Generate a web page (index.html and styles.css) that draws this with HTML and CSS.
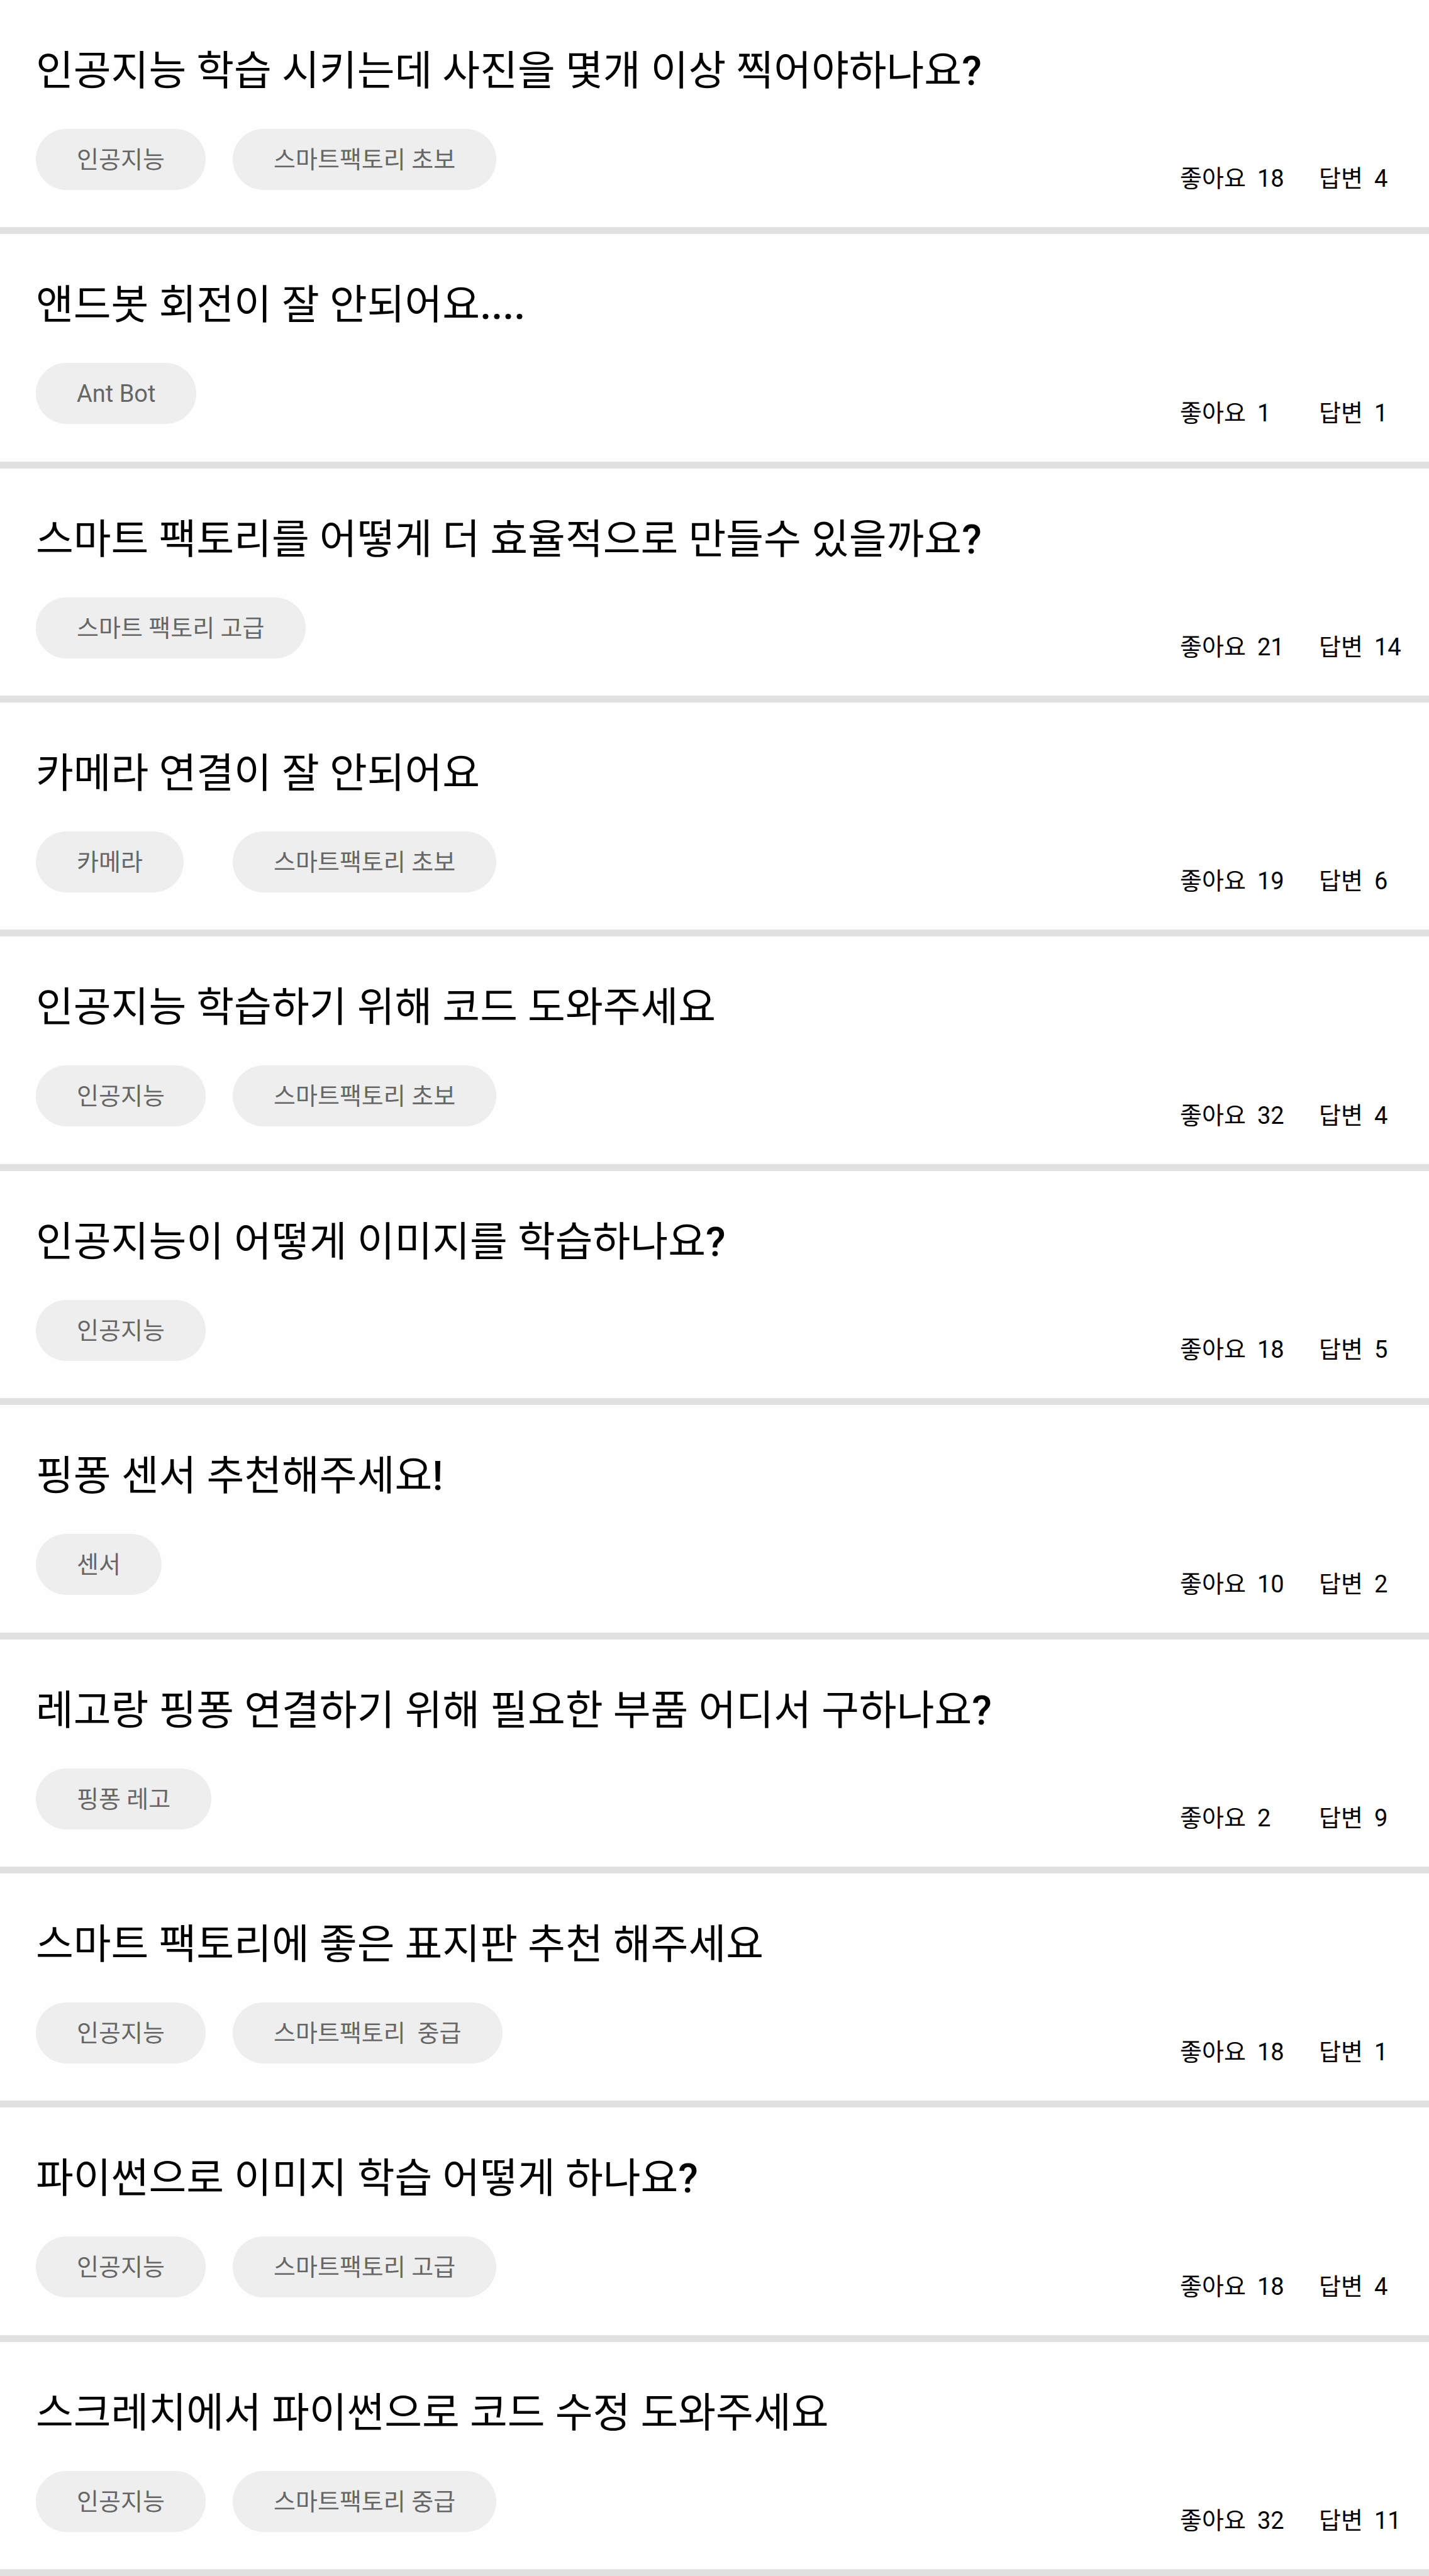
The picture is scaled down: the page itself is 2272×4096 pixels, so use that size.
FILE: index.html
```html
<!DOCTYPE html>
<html lang="ko">
<head>
  <meta charset="utf-8">
  <meta name="viewport" content="width=device-width, initial-scale=1">
  <title>질문 목록</title>
  <link rel="stylesheet" href="styles.css">
</head>
<body>
  <main class="questions">
    <article class="question">
      <div class="question-body">
        <h2 class="question-title"><a href="#q1">인공지능 학습 시키는데 사진을 몇개 이상 찍어야하나요<span class="mark">?</span></a></h2>
        <ul class="tags"><li><a class="tag" href="#t">인공지능</a></li><li><a class="tag" href="#t">스마트팩토리 초보</a></li></ul>
      </div>
      <dl class="stats"><div class="stat"><dt>좋아요</dt><dd>18</dd></div><div class="stat"><dt>답변</dt><dd>4</dd></div></dl>
    </article>
    <article class="question">
      <div class="question-body">
        <h2 class="question-title"><a href="#q2">앤드봇 회전이 잘 안되어요<span class="mark">....</span></a></h2>
        <ul class="tags"><li><a class="tag" href="#t">Ant Bot</a></li></ul>
      </div>
      <dl class="stats"><div class="stat"><dt>좋아요</dt><dd>1</dd></div><div class="stat"><dt>답변</dt><dd>1</dd></div></dl>
    </article>
    <article class="question">
      <div class="question-body">
        <h2 class="question-title"><a href="#q3">스마트 팩토리를 어떻게 더 효율적으로 만들수 있을까요<span class="mark">?</span></a></h2>
        <ul class="tags"><li><a class="tag" href="#t">스마트 팩토리 고급</a></li></ul>
      </div>
      <dl class="stats"><div class="stat"><dt>좋아요</dt><dd>21</dd></div><div class="stat"><dt>답변</dt><dd>14</dd></div></dl>
    </article>
    <article class="question">
      <div class="question-body">
        <h2 class="question-title"><a href="#q4">카메라 연결이 잘 안되어요</a></h2>
        <ul class="tags"><li><a class="tag" href="#t">카메라</a></li><li><a class="tag" href="#t">스마트팩토리 초보</a></li></ul>
      </div>
      <dl class="stats"><div class="stat"><dt>좋아요</dt><dd>19</dd></div><div class="stat"><dt>답변</dt><dd>6</dd></div></dl>
    </article>
    <article class="question">
      <div class="question-body">
        <h2 class="question-title"><a href="#q5">인공지능 학습하기 위해 코드 도와주세요</a></h2>
        <ul class="tags"><li><a class="tag" href="#t">인공지능</a></li><li><a class="tag" href="#t">스마트팩토리 초보</a></li></ul>
      </div>
      <dl class="stats"><div class="stat"><dt>좋아요</dt><dd>32</dd></div><div class="stat"><dt>답변</dt><dd>4</dd></div></dl>
    </article>
    <article class="question">
      <div class="question-body">
        <h2 class="question-title"><a href="#q6">인공지능이 어떻게 이미지를 학습하나요<span class="mark">?</span></a></h2>
        <ul class="tags"><li><a class="tag" href="#t">인공지능</a></li></ul>
      </div>
      <dl class="stats"><div class="stat"><dt>좋아요</dt><dd>18</dd></div><div class="stat"><dt>답변</dt><dd>5</dd></div></dl>
    </article>
    <article class="question">
      <div class="question-body">
        <h2 class="question-title"><a href="#q7">핑퐁 센서 추천해주세요<span class="mark">!</span></a></h2>
        <ul class="tags"><li><a class="tag" href="#t">센서</a></li></ul>
      </div>
      <dl class="stats"><div class="stat"><dt>좋아요</dt><dd>10</dd></div><div class="stat"><dt>답변</dt><dd>2</dd></div></dl>
    </article>
    <article class="question">
      <div class="question-body">
        <h2 class="question-title"><a href="#q8">레고랑 핑퐁 연결하기 위해 필요한 부품 어디서 구하나요<span class="mark">?</span></a></h2>
        <ul class="tags"><li><a class="tag" href="#t">핑퐁 레고</a></li></ul>
      </div>
      <dl class="stats"><div class="stat"><dt>좋아요</dt><dd>2</dd></div><div class="stat"><dt>답변</dt><dd>9</dd></div></dl>
    </article>
    <article class="question">
      <div class="question-body">
        <h2 class="question-title"><a href="#q9">스마트 팩토리에 좋은 표지판 추천 해주세요</a></h2>
        <ul class="tags"><li><a class="tag" href="#t">인공지능</a></li><li><a class="tag" href="#t">스마트팩토리  중급</a></li></ul>
      </div>
      <dl class="stats"><div class="stat"><dt>좋아요</dt><dd>18</dd></div><div class="stat"><dt>답변</dt><dd>1</dd></div></dl>
    </article>
    <article class="question">
      <div class="question-body">
        <h2 class="question-title"><a href="#q10">파이썬으로 이미지 학습 어떻게 하나요<span class="mark">?</span></a></h2>
        <ul class="tags"><li><a class="tag" href="#t">인공지능</a></li><li><a class="tag" href="#t">스마트팩토리 고급</a></li></ul>
      </div>
      <dl class="stats"><div class="stat"><dt>좋아요</dt><dd>18</dd></div><div class="stat"><dt>답변</dt><dd>4</dd></div></dl>
    </article>
    <article class="question">
      <div class="question-body">
        <h2 class="question-title"><a href="#q11">스크레치에서 파이썬으로 코드 수정 도와주세요</a></h2>
        <ul class="tags"><li><a class="tag" href="#t">인공지능</a></li><li><a class="tag" href="#t">스마트팩토리 중급</a></li></ul>
      </div>
      <dl class="stats"><div class="stat"><dt>좋아요</dt><dd>32</dd></div><div class="stat"><dt>답변</dt><dd>11</dd></div></dl>
    </article>
  </main>
</body>
</html>
```
FILE: styles.css
```css
* {
  box-sizing: border-box;
}

body {
  margin: 0;
  background: #fefefe;
  color: #000;
  font-family: Roboto, "Noto Sans CJK KR", sans-serif;
  font-size: 38px;
  line-height: 48px;
}

a {
  color: inherit;
  text-decoration: none;
}

/* Rows share the height of the window equally */
.questions {
  display: grid;
  grid-auto-rows: 1fr;
  min-height: 100vh;
}

.question {
  display: flex;
  justify-content: space-between;
  padding: 64px 0 53px 57px;
  border-bottom: 11px solid #e1e1e1;
}

.question-body {
  flex: 1;
}

.question-title {
  margin: 0 0 43px;
  font-size: 65px;
  font-weight: 400;
  line-height: 98px;
}

/* Punctuation is a step heavier than the Hangul */
.mark {
  font-weight: 500;
}

.tags {
  display: flex;
  gap: 43px;
  margin: 0;
  padding: 0;
  list-style: none;
}

.tags li {
  display: flex;
  min-width: 270px;
}

.tag {
  padding: 2px 65px 0;
  border-radius: 49px;
  background: #eee;
  color: #666;
  line-height: 95px;
  white-space: pre;
}

.stats {
  display: grid;
  grid-template-columns: 221px 175px;
  align-self: flex-end;
  margin: 0;
}

.stat {
  display: flex;
  gap: 18px;
}

.stat dd {
  margin: 0;
}
```
